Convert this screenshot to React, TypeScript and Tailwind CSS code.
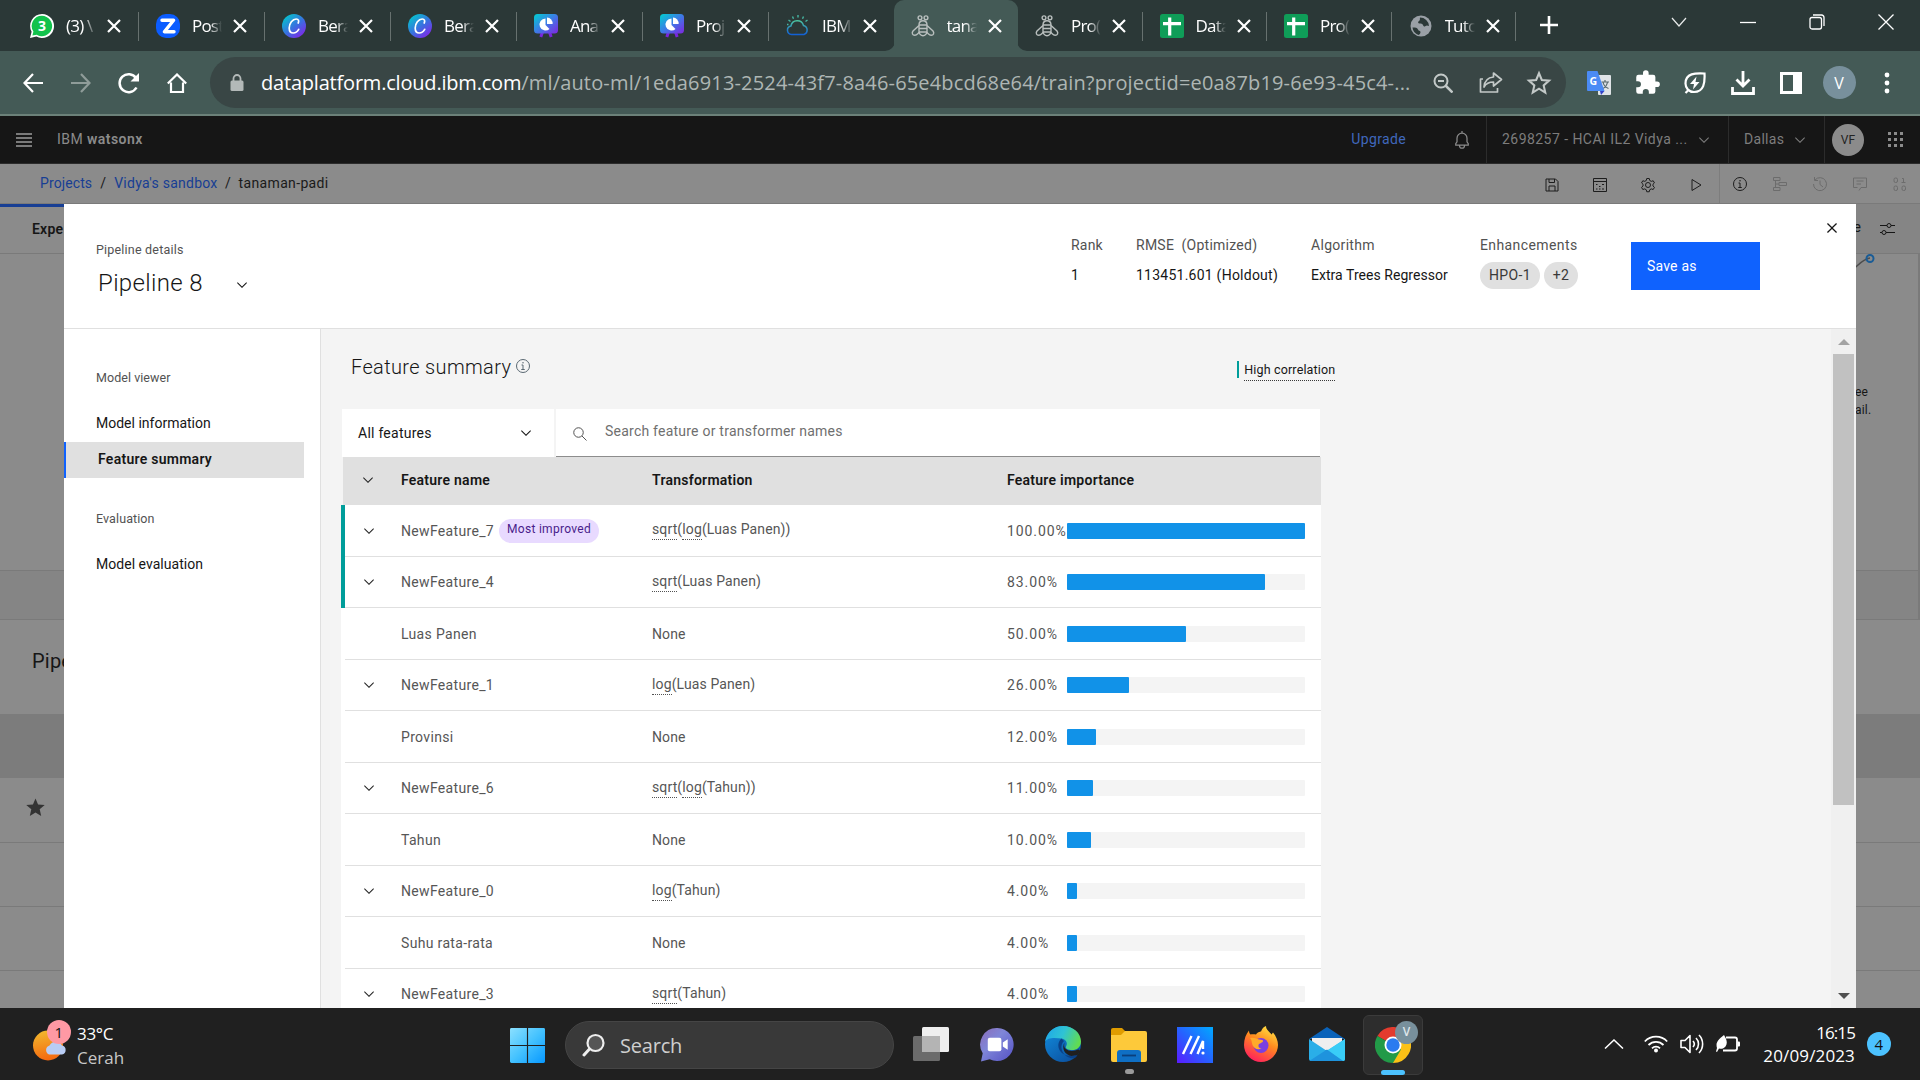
import type { ReactNode } from "react";

const SEGOE = "font-['Open_Sans','Noto_Sans',sans-serif]";

/* ---------- Carbon style glyphs ---------- */

function Chevron({ className }: { className?: string }) {
  return (
    <svg viewBox="0 0 32 32" className={className ?? "size-4"} fill="currentColor">
      <path d="M16 22L6 12 7.4 10.6 16 19.2 24.6 10.6 26 12z" />
    </svg>
  );
}

function Line({ children, className, w = 2 }: { children: ReactNode; className?: string; w?: number }) {
  return (
    <svg viewBox="0 0 32 32" className={className ?? "size-4"} fill="none" stroke="currentColor" strokeWidth={w}>
      {children}
    </svg>
  );
}

function InfoIcon({ className }: { className?: string }) {
  return (
    <Line className={className}>
      <circle cx="16" cy="16" r="13" />
      <path d="M13 14h3v9M12.5 23h7" />
      <circle cx="16" cy="9.5" r="1.5" fill="currentColor" stroke="none" />
    </Line>
  );
}

/* ---------- Browser favicons ---------- */

function WhatsApp() {
  return (
    <svg viewBox="0 0 24 24" className="size-6">
      <path d="M12 0a12 12 0 1 1-5.6 22.6L0 24l1.6-6.2A12 12 0 0 1 12 0z" fill="#fff" />
      <path d="M12 1.8a10.2 10.2 0 1 1-5.4 18.9L2.4 21.6l1-4A10.2 10.2 0 0 1 12 1.8z" fill="#12c24c" />
      <text x="12" y="17" textAnchor="middle" fontSize="14" fontWeight="700" fill="#fff" fontFamily="Open Sans">3</text>
    </svg>
  );
}

function Zed() {
  return (
    <svg viewBox="0 0 24 24" className="size-6">
      <rect width="24" height="24" rx="10" fill="#0b5cff" />
      <path d="M6 6.3h11.6L8.4 17.7H18" fill="none" stroke="#fff" strokeWidth="3.4" strokeLinejoin="round" strokeLinecap="round" />
    </svg>
  );
}

function Canva() {
  return (
    <svg viewBox="0 0 24 24" className="size-6">
      <defs>
        <linearGradient id="cv" x1="0.1" y1="0.1" x2="0.8" y2="0.95">
          <stop offset="0" stopColor="#05c3cc" />
          <stop offset="0.55" stopColor="#3a6fe0" />
          <stop offset="1" stopColor="#7d2ae8" />
        </linearGradient>
      </defs>
      <circle cx="12" cy="12" r="12" fill="url(#cv)" />
      <path d="M16.2 9c1-1.900.4-4-2-4-3.600 0-7 4.600-7 9 0 3 1.500 5 4 5 2.300 0 4.200-1.400 5.500-3.700" fill="none" stroke="#fff" strokeWidth="1.700" strokeLinecap="round" />
    </svg>
  );
}

function Deck() {
  return (
    <svg viewBox="0 0 24 24" className="size-6">
      <defs>
        <linearGradient id="dk" x1="0" y1="0" x2="1" y2="1">
          <stop offset="0" stopColor="#00cfd0" />
          <stop offset="0.5" stopColor="#3d7be6" />
          <stop offset="1" stopColor="#8025e0" />
        </linearGradient>
      </defs>
      <path d="M8.500 18L6.800 23M15.500 18l1.700 5" stroke="#7a25dd" strokeWidth="3" />
      <rect width="24" height="19.500" rx="3.500" fill="url(#dk)" />
      <path d="M11.500 4.500v6.500l4 4A6 6 0 1 1 11.500 4.500z" fill="#fff" />
      <path d="M13 3.500a6 6 0 0 1 5.600 6.500H13z" fill="#fff" />
    </svg>
  );
}

function Cloud() {
  return (
    <svg viewBox="0 0 24 24" className="size-6" fill="none">
      <defs>
        <linearGradient id="cl" x1="0" y1="0" x2="0" y2="1">
          <stop offset="0" stopColor="#4cc3a0" />
          <stop offset="1" stopColor="#1261d6" />
        </linearGradient>
      </defs>
      <path d="M5.500 20.500a4.300 4.300 0 0 1-.6-8.500 6.500 6.500 0 0 1 12.600-.5 4.700 4.700 0 0 1 .5 9z" stroke="url(#cl)" strokeWidth="1.500" />
      <path d="M12 1v2.500M6.500 2.500l1 2.200M17.500 2.500l-1 2.200M2.500 6l2 1.500M21.500 6l-2 1.500M1 10.500h1.500" stroke="#46b8a4" strokeWidth="1.400" />
    </svg>
  );
}

function Bee() {
  return (
    <svg viewBox="0 0 24 24" className="size-6" fill="none" stroke="#b9bfbe" strokeWidth="1.400">
      <circle cx="9" cy="3.800" r="1.900" />
      <circle cx="15" cy="3.800" r="1.900" />
      <path d="M8 11c0-3 1.500-4.300 4-4.300s4 1.300 4 4.300v6.500c0 2-1.800 4.200-4 4.200s-4-2.200-4-4.200zM8 11h8M8 14.500h8M8 18h8" />
      <path d="M8 11.500L2 17c-1.500 2-.5 4.300 1.800 4.300S8 18.500 8 18M16 11.500L22 17c1.500 2 .5 4.300-1.800 4.300S16 18.500 16 18" />
    </svg>
  );
}

function Sheets() {
  return (
    <svg viewBox="0 0 24 24" className="size-6">
      <rect width="24" height="24" rx="2.500" fill="#0f9d58" />
      <path d="M9.700 3.500v18M3 9.700h18" stroke="#fff" strokeWidth="3.200" />
    </svg>
  );
}

function Globe() {
  return (
    <svg viewBox="0 0 24 24" className="size-6">
      <circle cx="12" cy="12" r="10.500" fill="#9aa0a6" />
      <path d="M3.500 13.500c3 0 5 .3 5.500 2s2.500 1 2.500 2.500-1 2.500-2 3A9 9 0 0 1 3.500 13.500zM11 3.500c-.5 2 .5 2.500-1 3.500s-1 2.500.5 2.500 3 0 3.500 1.500 1.500 2 2.500 1 2.500-.5 3.500 0A9 9 0 0 0 11 3.500z" fill="#2b3837" />
    </svg>
  );
}

const tabs: { icon: ReactNode; label: string; active?: boolean; wide?: boolean; nosep?: boolean }[] = [
  { icon: <WhatsApp />, label: "(3) \\", wide: true },
  { icon: <Zed />, label: "Post", wide: true },
  { icon: <Canva />, label: "Bera", wide: true },
  { icon: <Canva />, label: "Bera", wide: true },
  { icon: <Deck />, label: "Ana", wide: true },
  { icon: <Deck />, label: "Proj", wide: true },
  { icon: <Cloud />, label: "IBM", nosep: true },
  { icon: <Bee />, label: "tana", active: true, nosep: true },
  { icon: <Bee />, label: "Pro(" },
  { icon: <Sheets />, label: "Data" },
  { icon: <Sheets />, label: "Pro(" },
  { icon: <Globe />, label: "Tuto" },
];

function TabStrip() {
  return (
    <div className={`flex h-[51px] bg-[#2b3837] pl-[13px] text-white ${SEGOE}`}>
      {tabs.map((t, i) => (
        <div
          key={i}
          className={`relative flex h-full shrink-0 items-center pl-[17px] ${t.wide ? "w-[126px]" : "w-[124.5px]"} ${
            t.active ? "rounded-t-[10px] bg-[#445a56]" : ""
          }`}
        >
          {t.active && (
            <>
              <svg viewBox="0 0 10 10" className="absolute -left-[9px] bottom-0 size-[10px]" fill="#445a56">
                <path d="M10 0v10H0A10 10 0 0 0 10 0z" />
              </svg>
              <svg viewBox="0 0 10 10" className="absolute -right-[9px] bottom-0 size-[10px]" fill="#445a56">
                <path d="M0 0v10h10A10 10 0 0 1 0 0z" />
              </svg>
            </>
          )}
          <span className="shrink-0">{t.icon}</span>
          <span className="ml-3 w-[30px] text-[17px] leading-6 tracking-[-0.8px] whitespace-nowrap [mask-image:linear-gradient(to_right,#000_60%,transparent)]">
            {t.label}
          </span>
          <svg viewBox="0 0 14 14" className="ml-[11px] size-[14px] shrink-0" stroke="#fff" strokeWidth="2.2">
            <path d="M1 1l12 12M13 1L1 13" />
          </svg>
          {!t.nosep && <span className="absolute top-[12px] right-0 h-[29px] w-px bg-[#67716f]" />}
        </div>
      ))}
      <svg viewBox="0 0 18 18" className="mt-4 ml-6 size-[18px]" stroke="#fff" strokeWidth="2.6">
        <path d="M9 0v18M0 9h18" />
      </svg>
      <div className="mr-[26px] ml-auto flex h-[43px] items-center gap-[53px]">
        <svg viewBox="0 0 16 16" className="size-4" fill="none" stroke="#e8eaea" strokeWidth="1.2">
          <path d="M1 4l7 8 7-8" />
        </svg>
        <svg viewBox="0 0 16 16" className="size-4" stroke="#fff" strokeWidth="1.3">
          <path d="M0 8.500h16" />
        </svg>
        <svg viewBox="0 0 16 16" className="size-4" fill="none" stroke="#fff" strokeWidth="1.300">
          <rect x="1" y="3.500" width="11.500" height="11.500" rx="2" />
          <path d="M4 1h8.500A2.700 2.700 0 0 1 15 3.500V12" />
        </svg>
        <svg viewBox="0 0 16 16" className="size-4" stroke="#fff" strokeWidth="1.3">
          <path d="M0.500 0.500l15 15M15.500 0.500l-15 15" />
        </svg>
      </div>
    </div>
  );
}

function Slot({ children, className }: { children: ReactNode; className?: string }) {
  return <div className={`flex w-12 shrink-0 items-center justify-center ${className ?? ""}`}>{children}</div>;
}

function Toolbar() {
  return (
    <div className={`flex h-[65px] items-center border-b-2 border-[#6c8179] bg-[#445a56] pl-[9px] text-white ${SEGOE}`}>
      <Slot>
        <svg viewBox="0 0 20 20" className="size-5" fill="none" stroke="#fff" strokeWidth="2.200">
          <path d="M20 10H1.500M10 1L1.500 10l8.500 9" />
        </svg>
      </Slot>
      <Slot>
        <svg viewBox="0 0 20 20" className="size-5" fill="none" stroke="#8f9c99" strokeWidth="2.200">
          <path d="M0 10h18.500M10 1l8.500 9-8.500 9" />
        </svg>
      </Slot>
      <Slot>
        <svg viewBox="0 0 22 22" className="size-[22px]" fill="none" stroke="#fff" strokeWidth="2.500">
          <path d="M18.500 15.500A9 9 0 1 1 18 6" />
          <path d="M21 1v8.500h-8.500z" fill="#fff" stroke="none" />
        </svg>
      </Slot>
      <Slot>
        <svg viewBox="0 0 20 20" className="size-5" fill="none" stroke="#fff" strokeWidth="2.200">
          <path d="M4 9.500V19h12V9.500M0.800 10.500L10 1.500l9.200 9" />
        </svg>
      </Slot>
      <div className="ml-[9px] flex h-[51px] w-[1356px] items-center rounded-full bg-[#394645]">
        <svg viewBox="0 0 14 18" className="ml-[20px] h-[18px] w-[14px]">
          <path d="M3.500 8V4.500a3.500 3.500 0 0 1 7 0V8" fill="none" stroke="#b3b9b8" strokeWidth="1.800" />
          <rect x="0.500" y="6.500" width="13" height="10.500" rx="1.500" fill="#b3b9b8" />
        </svg>
        <div className="ml-[17px] w-[1158px] text-[20px] leading-7 whitespace-nowrap text-[#aeb6b4]">
          <span className="tracking-[-0.2px] text-white">dataplatform.cloud.ibm.com</span>
          <span className="tracking-[0.17px]">/ml/auto-ml/1eda6913-2524-43f7-8a46-65e4bcd68e64/train?projectid=e0a87b19-6e93-45c4-...</span>
        </div>
        <Slot>
          <svg viewBox="0 0 20 20" className="size-5" fill="none" stroke="#c3c9c8" strokeWidth="2">
            <circle cx="8" cy="8" r="6.500" />
            <path d="M5 8h6" />
            <path d="M12.500 12.500l7 7" strokeWidth="2.500" />
          </svg>
        </Slot>
        <Slot>
          <svg viewBox="0 0 24 24" className="mb-px size-6" fill="none" stroke="#c3c9c8" strokeWidth="1.700" strokeLinejoin="round">
            <path d="M4 9H1.500v13h17v-4" />
            <path d="M14.500 3l8 6.500-8 6.500v-4C10 12 7 13.500 5 17c.5-6 4-9.500 9.500-10z" />
          </svg>
        </Slot>
        <Slot>
          <svg viewBox="0 0 24 24" className="size-[26px]" fill="none" stroke="#c3c9c8" strokeWidth="1.900">
            <path d="M12 3l2.600 6.200 6.700.6-5 4.400 1.500 6.600L12 17.300l-5.800 3.500 1.500-6.600-5-4.400 6.700-.6z" />
          </svg>
        </Slot>
      </div>
      <div className="ml-[9px] flex">
        <Slot>
          <svg viewBox="0 0 24 24" className="size-6">
            <rect x="11" y="4" width="13" height="20" rx="1" fill="#dfe3e6" />
            <path d="M14.500 11h7.500M18 9v2M16 11c.5 3 3 5.500 5.500 6.500M20.500 11c-.5 3-2.500 5.500-4.500 6.500" stroke="#56696f" strokeWidth="1.200" fill="none" />
            <path d="M13 20h4.500L14 24z" fill="#3342c8" />
            <path d="M1 0h9.500l7 20H1a1 1 0 0 1-1-1V1a1 1 0 0 1 1-1z" fill="#4b8bf5" />
            <text x="2.500" y="13.500" fontSize="10.500" fontWeight="700" fill="#fff" fontFamily="Open Sans">G</text>
          </svg>
        </Slot>
        <Slot>
          <svg viewBox="0 0 24 24" className="size-[27px]" fill="#fff">
            <path d="M20.500 11H19V7a2 2 0 0 0-2-2h-4V3.500a2.500 2.500 0 0 0-5 0V5H4a2 2 0 0 0-2 2v3.800h1.500a2.700 2.700 0 0 1 0 5.400H2V20a2 2 0 0 0 2 2h3.800v-1.500a2.700 2.700 0 0 1 5.400 0V22H17a2 2 0 0 0 2-2v-4h1.500a2.500 2.500 0 0 0 0-5z" />
          </svg>
        </Slot>
        <Slot>
          <svg viewBox="0 0 22 22" className="size-[22px]" fill="none" stroke="#fff" strokeWidth="2.200">
            <path d="M20.500 1.500c-9-.5-19-.5-19 10 0 5 3.500 8.500 8.500 8.500 10 0 11-9.500 10.500-18.500zM5 17.500L1.500 21" />
            <path d="M12.500 4.500L6 12h4l-1 5.500 6.500-7.500h-4z" fill="#fff" stroke="none" />
          </svg>
        </Slot>
        <Slot>
          <svg viewBox="0 0 24 24" className="size-6" fill="none" stroke="#fff" strokeWidth="2.800">
            <path d="M12 0v14M5.500 8.500L12 15l6.500-6.500M1.500 16v6.500h21V16" />
          </svg>
        </Slot>
        <Slot>
          <svg viewBox="0 0 22 22" className="size-[22px]">
            <path d="M0 0h22v22H0zM3 3v16h10V3z" fill="#fff" fillRule="evenodd" />
          </svg>
        </Slot>
        <Slot>
          <div className="flex size-[33px] items-center justify-center rounded-full bg-[#78909c] text-[16px] text-white">V</div>
        </Slot>
        <Slot>
          <svg viewBox="0 0 6 22" className="h-[22px] w-[6px]" fill="#fff">
            <circle cx="3" cy="3" r="2.400" />
            <circle cx="3" cy="11" r="2.400" />
            <circle cx="3" cy="19" r="2.400" />
          </svg>
        </Slot>
      </div>
    </div>
  );
}

/* ---------- watsonx chrome (dimmed behind the dialog) ---------- */

function AppHeader() {
  return (
    <div className="flex h-[48px] items-center border-b border-[#2c2c2c] bg-[#161616] text-sm text-[#7d7d7d]">
      <div className="ml-4 flex w-4 flex-col gap-[2px]">
        {[0, 1, 2, 3].map((i) => (
          <span key={i} className="h-[2px] bg-[#7a7a7a]" />
        ))}
      </div>
      <div className="ml-[25px] pb-px tracking-[0.45px] text-[#8b8b8b]">
        IBM <span className="font-semibold">watsonx</span>
      </div>
      <div className="ml-auto flex h-full items-center">
        <span className="pb-px tracking-[0.35px] text-[#4068bd]">Upgrade</span>
        <Line className="ml-[46px] size-5 text-[#8b8b8b]" w={2}>
          <path d="M6 24v-2l2-3v-6a8 8 0 0 1 16 0v6l2 3v2zM12 25a4 4 0 0 0 8 0M16 5V1.500" />
        </Line>
        <div className="ml-[14px] flex h-full w-[242px] items-center border-l border-[#2c2c2c] pl-[15px]">
          <span className="w-[194px] pb-px tracking-[0.45px] whitespace-nowrap">2698257 - HCAI IL2 Vidya ...</span>
          <Chevron />
        </div>
        <div className="flex h-full w-24 items-center border-l border-[#2c2c2c] pl-[15px]">
          <span className="w-[48px] pb-px tracking-[0.3px]">Dallas</span>
          <Chevron />
        </div>
        <div className="flex h-full w-24 items-center border-l border-[#2c2c2c] pl-[7px]">
          <span className="flex size-8 items-center justify-center rounded-full bg-[#8b8b8b] text-xs text-[#222]">VF</span>
          <span className="ml-[24px] grid grid-cols-3 gap-[3px]">
            {Array.from({ length: 9 }, (_, i) => (
              <span key={i} className="size-[3px] bg-[#8b8b8b]" />
            ))}
          </span>
        </div>
      </div>
    </div>
  );
}

function CrumbBar() {
  return (
    <div className="flex h-[40px] items-center border-b border-[#7a7a7a] bg-[#8b8b8b] pl-10 text-sm tracking-[0.25px] text-[#1a1a1a]">
      <div className="flex pb-px">
        <span className="tracking-[0.1px] text-[#173e94]">Projects</span>
        <span className="mx-[8px]">/</span>
        <span className="text-[#173e94]">Vidya's sandbox</span>
        <span className="mx-[7.5px]">/</span>
        <span className="tracking-[0.35px]">tanaman-padi</span>
      </div>
      <div className="ml-auto flex h-full items-center pt-[3px] text-[#1d1d1d] *:translate-x-px">
        <Slot>
          <Line>
            <path d="M4 4h19l5 5v19H4zM10 4v7h11V4M10 28V18h12v10" />
          </Line>
        </Slot>
        <Slot>
          <Line>
            <path d="M3 3h26v26H3zM3 9h26" />
            <path d="M8 15h3M20 15h4M14 19h3M8 24h3M14 24h3M20 24h4" />
          </Line>
        </Slot>
        <Slot>
          <Line>
            <circle cx="16" cy="16" r="5" />
            <path d="M13.500 3h5l1 4 3 1.700 3.900-1.200 2.500 4.300-3 2.800v3.300l3 2.800-2.500 4.300-3.900-1.200-3 1.700-1 4h-5l-1-4-3-1.700L5.600 25l-2.500-4.300 3-2.800v-3.300l-3-2.800 2.500-4.300 3.900 1.200 3-1.700z" />
          </Line>
        </Slot>
        <Slot>
          <Line>
            <path d="M8 5l18 11L8 27z" />
          </Line>
        </Slot>
      </div>
      <div className="flex h-full items-center border-l border-[#7d7d7d] text-[#6c6c6c]">
        <div className="flex w-10 justify-center text-[#1d1d1d]">
          <InfoIcon />
        </div>
        <div className="flex w-10 justify-center">
          <Line>
            <path d="M3 3h13v6H3zM14 13h15v6H14zM3 23h13v6H3zM7 9v14M7 16h7" />
          </Line>
        </div>
        <div className="flex w-10 justify-center">
          <Line>
            <path d="M6 8a13 13 0 1 1-3 8M5 2v7h7M16 9v8l6 5" />
          </Line>
        </div>
        <div className="flex w-10 justify-center">
          <Line>
            <path d="M14 29l4-6h11V4H3v19h8M9 10h14M9 16h9" />
          </Line>
        </div>
        <div className="flex w-10 justify-center">
          <Line>
            <rect x="4" y="4" width="7" height="9" rx="3" />
            <path d="M20 5h3v8M19 13h8" />
            <rect x="4" y="20" width="7" height="9" rx="3" />
            <rect x="20" y="20" width="7" height="9" rx="3" />
          </Line>
        </div>
      </div>
    </div>
  );
}

function Backdrop() {
  return (
    <div className="flex h-full flex-col bg-[#8b8b8b] text-[#161616]">
      <div className="flex h-[50px] shrink-0 items-center border-b border-[#7a7a7a] bg-[#858585] text-sm">
        <div className="flex h-full w-[190px] items-center border-t-[3px] border-[#173e94] bg-[#8b8b8b] pb-[3px] pl-8 font-semibold">Expe</div>
        <span className="mr-[18px] mb-1 ml-auto">e</span>
        <Line className="mr-[25px] size-4">
          <path d="M2 9h14M24 9h8M2 23h4M14 23h18" />
          <circle cx="20" cy="9" r="4" />
          <circle cx="10" cy="23" r="4" />
        </Line>
      </div>
      <div className="flex h-[317px] shrink-0 flex-col items-end border-r-2 border-b border-[#7a7a7a]">
        <svg viewBox="0 0 26 20" className="mr-[42px] h-5 w-[26px]" fill="none">
          <path d="M0 18C8 12 12 5 20 4" stroke="#4c4c4c" strokeWidth="1.500" />
          <circle cx="20" cy="4.500" r="3.500" stroke="#1a5c96" strokeWidth="2" />
        </svg>
        <div className="mt-[109px] mr-px w-[62px] text-xs leading-[18px]">
          ee
          <br />
          ail.
        </div>
      </div>
      <div className="h-[49px] shrink-0 border-r-2 border-b border-[#7a7a7a] bg-[#858585]" />
      <div className="flex h-[94px] shrink-0 items-center pb-[13px] pl-8 text-xl">Pipe</div>
      <div className="h-16 shrink-0 bg-[#7c7c7c]" />
      <div className="flex h-[65px] shrink-0 items-center border-b border-[#7a7a7a] pb-[5px] pl-[26px]">
        <svg viewBox="0 0 20 20" className="size-[19px]" fill="#333">
          <path d="M10 0.500l2.700 6.300 7 .6-5.300 4.500 1.600 7.100L10 15.300 4 19l1.600-7.100L.3 7.400l7-.6z" />
        </svg>
      </div>
      <div className="h-16 shrink-0 border-b border-[#7a7a7a]" />
      <div className="h-16 shrink-0 border-b border-[#7a7a7a]" />
    </div>
  );
}

/* ---------- Pipeline dialog ---------- */

function Meta({ label, children, className }: { label: string; children: ReactNode; className: string }) {
  return (
    <div className={`shrink-0 text-sm whitespace-nowrap ${className}`}>
      <div className="h-[19px] leading-[19px] text-[#525252]">{label}</div>
      <div className="mt-[5px] flex h-[30px] items-center">{children}</div>
    </div>
  );
}

const Fn = ({ children }: { children: string }) => (
  <span className="inline-block border-b border-dotted border-[#525252] leading-[19px]">{children}</span>
);

const rows: { name: string; expand?: boolean; best?: boolean; tr: ReactNode; pct: string; v: number }[] = [
  { name: "NewFeature_7", expand: true, best: true, tr: <><Fn>sqrt</Fn>(<Fn>log</Fn>(Luas Panen))</>, pct: "100.00%", v: 100 },
  { name: "NewFeature_4", expand: true, tr: <><Fn>sqrt</Fn>(Luas Panen)</>, pct: "83.00%", v: 83 },
  { name: "Luas Panen", tr: "None", pct: "50.00%", v: 50 },
  { name: "NewFeature_1", expand: true, tr: <><Fn>log</Fn>(Luas Panen)</>, pct: "26.00%", v: 26 },
  { name: "Provinsi", tr: "None", pct: "12.00%", v: 12 },
  { name: "NewFeature_6", expand: true, tr: <><Fn>sqrt</Fn>(<Fn>log</Fn>(Tahun))</>, pct: "11.00%", v: 11 },
  { name: "Tahun", tr: "None", pct: "10.00%", v: 10 },
  { name: "NewFeature_0", expand: true, tr: <><Fn>log</Fn>(Tahun)</>, pct: "4.00%", v: 4 },
  { name: "Suhu rata-rata", tr: "None", pct: "4.00%", v: 4 },
  { name: "NewFeature_3", expand: true, tr: <><Fn>sqrt</Fn>(Tahun)</>, pct: "4.00%", v: 4 },
];

function FeatureRow({ row, index }: { row: (typeof rows)[number]; index: number }) {
  return (
    <div className={`flex h-[51.5px] w-[980px] border-l-4 bg-white ${index < 2 ? "border-[#009d9a]" : "border-white"}`}>
      <div className="flex flex-1 items-center border-b border-[#e0e0e0] text-sm tracking-[0.33px] text-[#565656]">
        <div className="w-14 pl-4 text-[#262626]">{row.expand && <Chevron />}</div>
        <div className="flex w-[251px] items-center">
          {row.name}
          {row.best && (
            <span className="ml-[5px] h-6 rounded-full bg-[#e8daff] px-2 text-xs leading-[21px] tracking-[0.29px] text-[#491d8b]">
              Most improved
            </span>
          )}
        </div>
        <div className={`w-[355px] tracking-[0.12px] ${row.tr === "None" ? "" : "pb-[2px]"}`}>{row.tr}</div>
        <div className="w-[60px] tracking-[0.9px]">{row.pct}</div>
        <div className="h-4 w-[238px] rounded-[1px] bg-[#f4f4f4]">
          <div className="h-full rounded-[1px] bg-[#1192e8]" style={{ width: `${row.v}%` }} />
        </div>
      </div>
    </div>
  );
}

function Dialog() {
  return (
    <div className="absolute top-0 right-16 left-16 flex h-[804px] flex-col overflow-hidden bg-white text-[#161616]">
      <div className="relative flex h-[125px] shrink-0 border-b border-[#e0e0e0] pl-8">
        <div>
          <div className="mt-9 text-[12.5px] leading-5 tracking-[0.2px] text-[#525252]">Pipeline details</div>
          <div className="mt-[7px] ml-[2px] flex items-center">
            <span className="text-[24px] leading-8 [font-weight:350] tracking-[0.35px]">Pipeline 8</span>
            <Chevron className="mt-1 ml-[31px] size-4" />
          </div>
        </div>
        <div className="mr-24 ml-auto flex pt-8">
          <Meta label="Rank" className="w-[65px] tracking-[0.2px]">1</Meta>
          <Meta label="RMSE  (Optimized)" className="w-[175px] tracking-[0.25px] [&>div]:whitespace-pre">
            <span className="tracking-[0.24px]">113451.601 (Holdout)</span>
          </Meta>
          <Meta label="Algorithm" className="w-[169px] tracking-[0.3px]">
            <span className="tracking-[0.04px]">Extra Trees Regressor</span>
          </Meta>
          <Meta label="Enhancements" className="w-[151px] tracking-[0.4px]">
            <span className="flex h-[27px] w-[60px] items-center justify-center rounded-full bg-[#e0e0e0] text-[#393939]">HPO-1</span>
            <span className="ml-1 flex h-[27px] w-[34px] items-center justify-center rounded-full bg-[#e0e0e0] text-[#393939]">+2</span>
          </Meta>
          <button className="mt-[6px] flex h-12 w-[129px] items-center bg-[#0f62fe] pb-px pl-4 text-sm text-white">Save as</button>
        </div>
        <svg viewBox="0 0 32 32" className="absolute top-[14px] right-[14px] size-5" fill="currentColor">
          <path d="M17.414 16L24 9.414 22.586 8 16 14.586 9.414 8 8 9.414 14.586 16 8 22.586 9.414 24 16 17.414 22.586 24 24 22.586z" />
        </svg>
      </div>
      <div className="flex min-h-0 flex-1">
        <nav className="w-[257px] shrink-0 border-r border-[#e0e0e0] pt-[39px]">
          <div className="h-5 pl-8 text-[12.5px] leading-5 tracking-[0.05px] text-[#525252]">Model viewer</div>
          <div className="mt-[17px] h-9 pl-8 text-sm leading-9 tracking-[0px]">Model information</div>
          <div className="mt-px h-9 w-60 border-l-2 border-[#0f62fe] bg-[#e0e0e0] pl-8 text-sm leading-[34px] font-semibold tracking-[0.27px]">
            Feature summary
          </div>
          <div className="mt-[31px] h-5 pl-8 text-[12.5px] leading-5 tracking-[0.1px] text-[#525252]">Evaluation</div>
          <div className="mt-[17px] h-9 pl-8 text-sm leading-9 tracking-[0.03px]">Model evaluation</div>
        </nav>
        <main className="min-w-0 flex-1 overflow-hidden bg-[#f4f4f4] pl-5">
          <div className="flex h-[80px] pl-[10px]">
            <h2 className="mt-[24px] text-xl leading-7 [font-weight:350] tracking-[0.35px]">Feature summary</h2>
            <InfoIcon className="mt-[29px] ml-[4px] size-4 text-[#5a6872]" />
            <div className="mt-[32px] ml-[706px] h-[17px] w-[2px] bg-[#009d9a]" />
            <div className="mt-[32px] ml-[5px] h-5 border-b border-dotted border-[#393939] text-[12.500px] leading-[18px] tracking-[0.15px]">High correlation</div>
          </div>
          <div className="flex h-12 gap-[2px] pl-px">
            <div className="flex w-[212px] items-center bg-white pl-4 text-sm tracking-[0.25px]">
              <span className="w-40 pb-px">All features</span>
              <Chevron />
            </div>
            <div className="flex w-[764px] items-center border-b border-[#8d8d8d] bg-white pl-4 text-sm tracking-[0.23px] text-[#6f6f6f]">
              <Line className="mt-[2px] mr-[17px] size-4 text-[#525252]">
                <circle cx="13" cy="13" r="9.500" />
                <path d="M20 20l9 9" />
              </Line>
              <span className="pb-[3px]">Search feature or transformer names</span>
            </div>
          </div>
          <div className="ml-[2px] flex h-[48.4px] w-[978px] items-center bg-[#e0e0e0] pb-[2px] text-sm font-semibold tracking-[0.25px]">
            <div className="w-[58px] pl-[17px] text-[#262626]">
              <Chevron />
            </div>
            <div className="w-[251px]">Feature name</div>
            <div className="w-[355px]">Transformation</div>
            <div>Feature importance</div>
          </div>
          {rows.map((r, i) => (
            <FeatureRow key={i} row={r} index={i} />
          ))}
        </main>
        <div className="flex w-[25px] shrink-0 flex-col items-center bg-[#f0f0f0]">
          <span className="mt-[10px] h-0 w-0 border-x-[6px] border-b-[6px] border-x-transparent border-b-[#a3a3a3]" />
          <span className="mt-[9px] h-[451px] w-[21px] bg-[#c1c1c1]" />
          <span className="mt-auto mb-[9px] h-0 w-0 border-x-[6px] border-t-[6px] border-x-transparent border-t-[#505050]" />
        </div>
      </div>
    </div>
  );
}

/* ---------- Windows taskbar ---------- */

function Task({ children }: { children: ReactNode }) {
  return <div className="relative flex h-full w-[66px] shrink-0 items-center justify-center">{children}</div>;
}

function Taskbar() {
  return (
    <div className={`flex h-[72px] items-center bg-[#202020] text-white ${SEGOE}`}>
      <div className="flex w-[494px] items-center pl-[33px]">
        <svg viewBox="0 0 40 44" className="-mt-1 h-11 w-10">
          <defs>
            <linearGradient id="sun" x1="0.200" y1="0" x2="0.400" y2="1">
              <stop offset="0" stopColor="#f2b92e" />
              <stop offset="1" stopColor="#f4690f" />
            </linearGradient>
          </defs>
          <circle cx="15" cy="25.500" r="15" fill="url(#sun)" />
          <path d="M16 34.500a4.800 4.800 0 0 1 .5-9 7 7 0 0 1 12.500 0 4.600 4.600 0 0 1 0 9z" fill="#b9cdf5" />
          <circle cx="26" cy="12" r="12" fill="#ff99a4" />
          <text x="26" y="17.500" textAnchor="middle" fontSize="15" fill="#111" fontFamily="Open Sans">1</text>
        </svg>
        <div className="mt-[3px] ml-1 text-[17px] leading-[24px]">
          <div className="tracking-[-0.3px]">33°C</div>
          <div className="tracking-[0px] text-[#c8c8c8]">Cerah</div>
        </div>
      </div>
      <Task>
        <svg viewBox="0 0 36 36" className="mt-[3px] size-[35px]">
          <defs>
            <linearGradient id="win" x1="0" y1="0" x2="1" y2="1">
              <stop offset="0" stopColor="#8be0ff" />
              <stop offset="0.500" stopColor="#44c2ff" />
              <stop offset="1" stopColor="#0798ff" />
            </linearGradient>
          </defs>
          <path d="M1.500 0H17.400v17.400H0V1.500A1.500 1.500 0 0 1 1.500 0zM18.600 0h15.900A1.500 1.500 0 0 1 36 1.500V17.400H18.600zM0 18.600h17.400V36H1.500A1.500 1.500 0 0 1 0 34.500zM18.600 18.600H36v15.900a1.500 1.500 0 0 1-1.500 1.500H18.600z" fill="url(#win)" />
        </svg>
      </Task>
      <div className="mt-[2px] mr-[4px] ml-[5px] flex h-12 w-[329px] items-center rounded-full border border-[#454545] bg-[#393939]">
        <svg viewBox="0 0 24 24" className="ml-[16px] size-6" fill="none" stroke="#eee" strokeWidth="2.200" strokeLinecap="round">
          <circle cx="13.500" cy="10" r="8" fill="#555" />
          <path d="M7.500 16L2 22" strokeWidth="3" />
        </svg>
        <span className="mt-px ml-[14px] text-[20px] tracking-[-0.2px] text-[#cfcfcf]">Search</span>
      </div>
      <Task>
        <svg viewBox="0 0 36 36" className="size-9">
          <rect x="9" y="1" width="27" height="25" rx="1.500" fill="#efefef" />
          <rect x="0" y="10" width="27" height="25" rx="1.500" fill="#6b6b6b" />
          <path d="M9 10h18v16H9z" fill="#b4b4b4" />
        </svg>
      </Task>
      <Task>
        <svg viewBox="0 0 36 36" className="mt-px size-[35px]">
          <defs>
            <linearGradient id="tm" x1="0" y1="0" x2="1" y2="1">
              <stop offset="0" stopColor="#8c6cb8" />
              <stop offset="0.400" stopColor="#7f86d8" />
              <stop offset="1" stopColor="#5450c4" />
            </linearGradient>
          </defs>
          <path d="M18 1a17 17 0 1 1-8 32.200L1 35.500l1.800-8.500A17 17 0 0 1 18 1z" fill="url(#tm)" />
          <rect x="8" y="11" width="14" height="14" rx="2" fill="#fff" />
          <path d="M23.500 16l5-3.500v11l-5-3.500z" fill="#fff" />
        </svg>
      </Task>
      <Task>
        <svg viewBox="0 0 36 36" className="size-9">
          <defs>
            <linearGradient id="eg" x1="0" y1="0.200" x2="1" y2="0.500">
              <stop offset="0" stopColor="#1fa7e8" />
              <stop offset="0.500" stopColor="#2fc3d4" />
              <stop offset="1" stopColor="#62dc4f" />
            </linearGradient>
            <linearGradient id="eb" x1="0" y1="0" x2="0.800" y2="1">
              <stop offset="0" stopColor="#128fe0" />
              <stop offset="1" stopColor="#0b4f9e" />
            </linearGradient>
          </defs>
          <circle cx="18" cy="18" r="18" fill="url(#eb)" />
          <path d="M0 16C2 6 9 0 18 0c10 0 18 7 18 15.500 0 6-4.500 8.500-8.500 8.500-4.500 0-7.500-1.500-6.500-3.500 1.500-2 1.500-7-4.500-8C9 11.500 2 11.500 0 16z" fill="url(#eg)" />
          <path d="M16.500 12.500C11 17 12 29 26 30c3 0 5.500-1 7-2-1 2-2 3-3 4-4 1-8-1-10-3-4-4-5-10-1-14z" fill="#0a4187" />
          <path d="M20 15.500c-1 2-1.500 6 1 7.500 2.500 2.500 8 2.500 12.500.5l2 1.500-3 4-6 1c-6-1-11-7-6.500-14.500z" fill="#202020" />
        </svg>
      </Task>
      <Task>
        <svg viewBox="0 0 36 34" className="mt-[2px] h-[34px] w-9">
          <path d="M0 2a2 2 0 0 1 2-2h9l4 4h0l-2 6H0z" fill="#e09c00" />
          <path d="M14 3h20a2 2 0 0 1 2 2v27a2 2 0 0 1-2 2H2a2 2 0 0 1-2-2V7h10z" fill="#fdc93a" />
          <path d="M6 34V25a3 3 0 0 1 3-3h18a3 3 0 0 1 3 3v9z" fill="#0f6fc4" />
          <path d="M11 27.500h14" stroke="#0a3f7c" strokeWidth="1.800" />
        </svg>
        <span className="absolute bottom-[6px] h-[5px] w-[9px] rounded-full bg-[#9a9a9a]" />
      </Task>
      <Task>
        <svg viewBox="0 0 36 36" className="mt-[2px] size-9">
          <defs>
            <linearGradient id="as" x1="0" y1="1" x2="1" y2="0">
              <stop offset="0" stopColor="#5b1bff" />
              <stop offset="0.500" stopColor="#2563ff" />
              <stop offset="1" stopColor="#00aaff" />
            </linearGradient>
          </defs>
          <rect width="36" height="36" fill="url(#as)" />
          <path d="M6 27l8.500-18M13.500 27L22 9M20.500 27L26 14v8" stroke="#fff" strokeWidth="2.400" fill="none" />
          <circle cx="26" cy="26" r="1.600" fill="#fff" />
        </svg>
      </Task>
      <Task>
        <svg viewBox="0 0 36 36" className="size-9">
          <defs>
            <linearGradient id="ff" x1="0.800" y1="0" x2="0.300" y2="1">
              <stop offset="0" stopColor="#ffe644" />
              <stop offset="0.450" stopColor="#ff8a1f" />
              <stop offset="1" stopColor="#ff1d5e" />
            </linearGradient>
          </defs>
          <path d="M18 36A17 17 0 0 1 1 19C1 13 3 8 6 4.500c0 2 .6 3 1.500 4C9 8 11 8 13 8.500 15 5.500 18 5.500 18 5.500c1-3 3-5 5-5.500 0 4 4 6 5.500 8.500L30 6.500c3 3.500 5 8 5 12.500a17 17 0 0 1-17 17z" fill="url(#ff)" />
          <circle cx="18" cy="19.500" r="7.500" fill="#7a3fe0" />
          <path d="M7 12c4-1 7 1 9 1.500 3 .5 4 0 4 1.500 0 2-4 2-4.500 4s1 3.500 3 3.500c-4 2-8-.5-9-3.500S9 14 7 12z" fill="#ffab2b" />
        </svg>
      </Task>
      <Task>
        <svg viewBox="0 0 36 34" className="h-[34px] w-9">
          <path d="M0 12L18 0l18 12z" fill="#0a63ba" />
          <path d="M3 11h30v12H3z" fill="#efefef" />
          <path d="M0 12l18 12L36 12v20a2 2 0 0 1-2 2H2a2 2 0 0 1-2-2z" fill="#2aaee8" />
          <path d="M36 12L18 23.500 34 34a2 2 0 0 0 2-2z" fill="#39cdf7" />
          <path d="M18 22.500L1 33.500Q1.500 34 2 34h32z" fill="#1e93dd" />
        </svg>
      </Task>
      <Task>
        <div className="relative mt-px flex h-[60px] w-[60px] items-center justify-center rounded-md border border-[#3b3b3b] bg-[#2d2d2d]">
          <svg viewBox="0 0 36 36" className="size-9">
            <path d="M18 18L2.400 9A18 18 0 0 1 33.600 9z" fill="#e33b2e" />
            <path d="M18 18h0L33.600 9A18 18 0 0 1 18 36z" fill="#fbc116" />
            <path d="M18 18l8 4.500L18 36A18 18 0 0 1 2.400 9z" fill="#229a48" />
            <circle cx="18" cy="18" r="8.500" fill="#fff" />
            <circle cx="18" cy="18" r="6.700" fill="#2b7bf0" />
          </svg>
          <span className="absolute top-[5px] right-[4px] flex size-[23px] items-center justify-center rounded-full bg-[#78909c] text-[12px] font-semibold text-[#dfe6ea]">V</span>
          <span className="absolute -bottom-px h-[5px] w-6 rounded-full bg-[#4cc2ff]" />
        </div>
      </Task>
      <div className="mr-[29px] ml-auto flex items-center">
        <svg viewBox="0 0 20 10" className="h-[10px] w-5" fill="none" stroke="#fff" strokeWidth="1.500">
          <path d="M1 9.500L10 1l9 8.500" />
        </svg>
        <svg viewBox="0 0 24 18" className="ml-5 h-[18px] w-6" fill="none" stroke="#fff" strokeWidth="1.800">
          <path d="M0.800 6.500a15.500 15.500 0 0 1 22.400 0M4.500 10a10.500 10.500 0 0 1 15 0M8 13.300a5.700 5.700 0 0 1 8 0" />
          <circle cx="12" cy="15.500" r="2" fill="#fff" stroke="none" />
        </svg>
        <svg viewBox="0 0 24 20" className="ml-3 h-5 w-6" fill="none" stroke="#fff" strokeWidth="1.600">
          <path d="M1 6.500h4L10 1.500v17L5 13.500H1z" strokeLinejoin="round" />
          <path d="M13 7a4.500 4.500 0 0 1 0 6M16 4a8.500 8.500 0 0 1 0 12M19 1a13 13 0 0 1 0 18" />
        </svg>
        <svg viewBox="0 0 24 18" className="ml-3 h-[18px] w-6">
          <path d="M10 2.500h9a2 2 0 0 1 2 2v9a2 2 0 0 1-2 2H7" fill="none" stroke="#fff" strokeWidth="1.800" />
          <path d="M21.500 6.500H23a1 1 0 0 1 1 1v3a1 1 0 0 1-1 1h-1.500z" fill="#fff" />
          <path d="M8 0c2.500 4 4 8 1.500 11.500C7.500 14 5 14 3 13.500L1 17l-1-.5 1-3.500C-.5 8 1.500 5 8 0z" fill="#fff" />
        </svg>
        <div className="ml-[23px] text-right text-[17px] leading-[23px]">
          <div className="tracking-[-0.9px]">16:15</div>
          <div className="tracking-[0.15px]">20/09/2023</div>
        </div>
        <span className="ml-3 flex size-6 items-center justify-center rounded-full bg-[#4cc2ff] text-[15px] text-[#111]">4</span>
      </div>
    </div>
  );
}

export default function App() {
  return (
    <div className="flex h-[1080px] w-[1920px] flex-col overflow-hidden bg-[#8b8b8b] font-[Roboto,sans-serif] tracking-[0.2px]">
      <TabStrip />
      <Toolbar />
      <AppHeader />
      <CrumbBar />
      <div className="relative h-[804px] shrink-0">
        <Backdrop />
        <Dialog />
      </div>
      <Taskbar />
    </div>
  );
}
